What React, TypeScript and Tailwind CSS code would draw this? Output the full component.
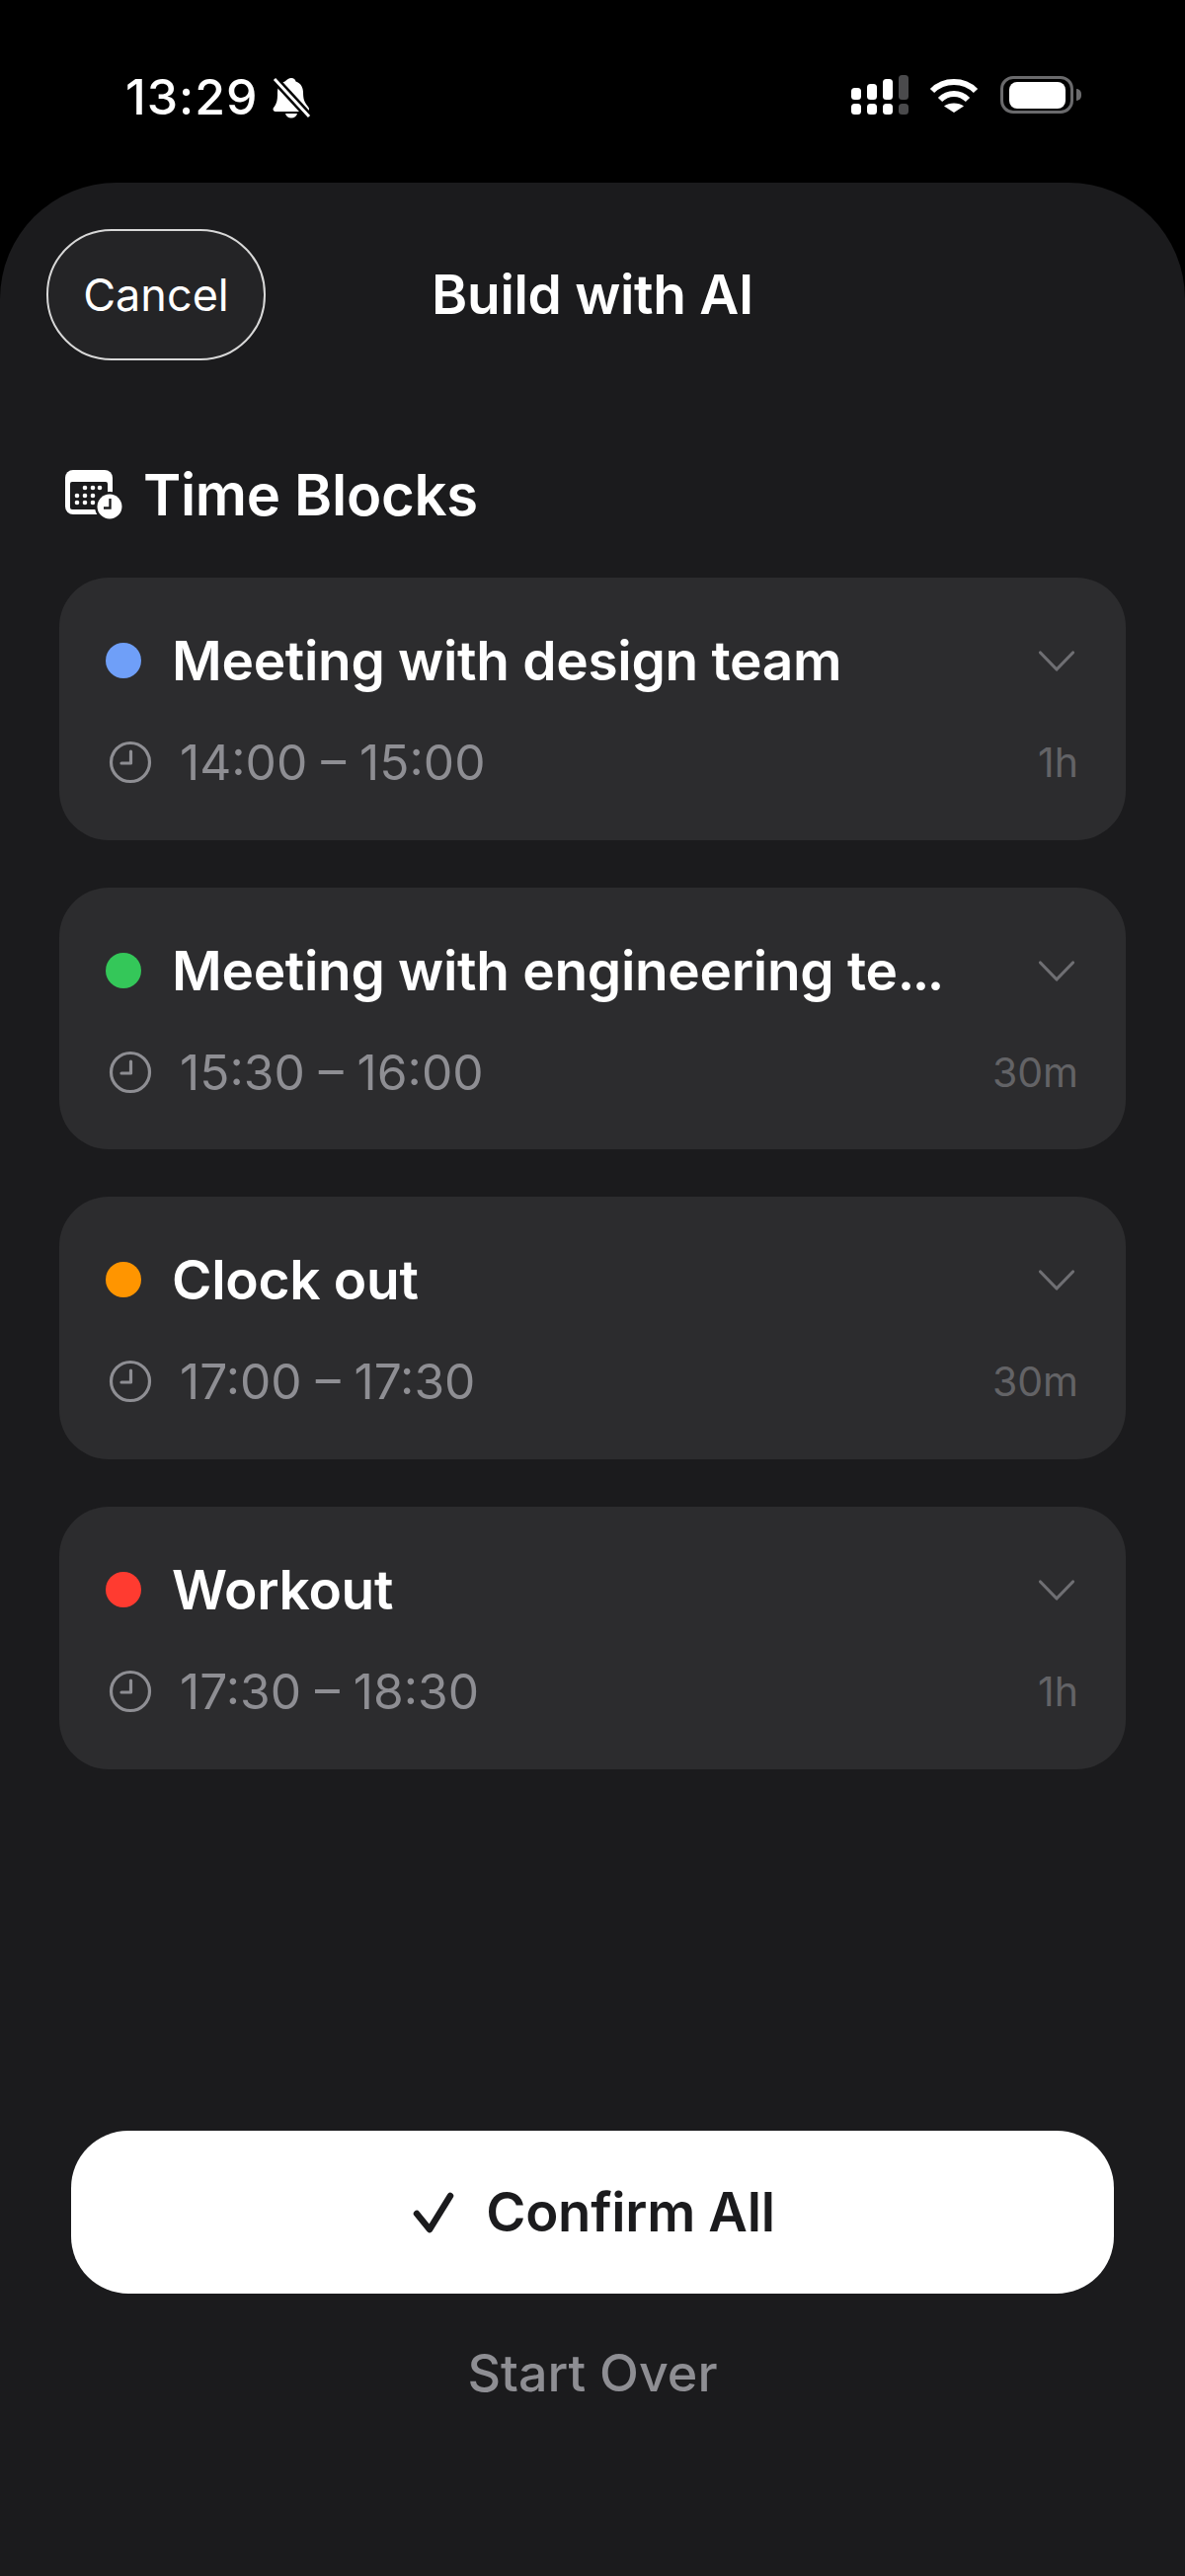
import React from "react";

const Clock = () => (
  <svg width="44" height="44" viewBox="0 0 44 44" fill="none" stroke="#8e8e93" strokeWidth="3.200" strokeLinecap="round" strokeLinejoin="round" className="shrink-0">
    <circle cx="22" cy="22" r="19.500" />
    <path d="M22.500 11V23H13" />
  </svg>
);

const Chevron = () => (
  <svg width="38" height="24" viewBox="0 0 38 24" fill="none" stroke="#6f6f73" strokeWidth="3.200" strokeLinecap="round" strokeLinejoin="round" className="mr-[3px] mt-[2px] shrink-0">
    <path d="M2.500 3L19 20L35.500 3" />
  </svg>
);

const items = [
  { title: "Meeting with design team", time: "14:00 – 15:00", dur: "1h", dot: "bg-[#6f9ff8]" },
  { title: "Meeting with engineering te", more: true, time: "15:30 – 16:00", dur: "30m", dot: "bg-[#34c759]" },
  { title: "Clock out", time: "17:00 – 17:30", dur: "30m", dot: "bg-[#ff9500]" },
  { title: "Workout", time: "17:30 – 18:30", dur: "1h", dot: "bg-[#ff3b30]" },
];

const CalendarClock = () => {
  const pts = [[21, 18], [29, 18], [36, 18], [13, 26], [21, 26], [29, 26], [13, 33], [21, 33], [29, 33]];
  return (
    <svg width="60" height="50" viewBox="0 0 60 50" className="shrink-0">
      <rect x="1" y="0" width="48" height="45" rx="8" fill="#fff" />
      <rect x="6" y="12" width="38" height="28" rx="2" fill="#1b1b1d" />
      <g fill="#fff">
        {pts.map(([x, y]) => (
          <circle key={`${x}-${y}`} cx={x} cy={y} r="2.300" />
        ))}
      </g>
      <circle cx="46" cy="37" r="15" fill="#1b1b1d" />
      <circle cx="46" cy="37" r="12.500" fill="#fff" />
      <path d="M46.500 29V38.500H40" stroke="#1b1b1d" strokeWidth="2.400" fill="none" />
    </svg>
  );
};

export default function App() {
  return (
    <div className="flex h-[2609px] w-[1200px] flex-col overflow-hidden bg-black font-['Inter','Liberation_Sans',sans-serif] text-white">
      <div className="flex h-[185px] shrink-0 items-start justify-between pl-[127px] pr-[105px] pt-[69px]">
        <div className="flex items-center gap-[13px]">
          <span className="text-[50px] font-medium leading-[58px] tracking-[1px]">13:29</span>
          <svg width="40" height="42" viewBox="0 0 40 42" className="mt-[2px]">
            <path fill="#fff" d="M20 1c2.500 0 4 1.500 4.500 3.500 5 1.500 7.500 6 7.500 11 0 6 1 9 3 12 2 2.500 3 3.500 3 5 0 1.500-1 2.500-2.500 2.500H4c-1.500 0-2.500-1-2.500-2.500 0-1.500 2-3 3-5.500 1.500-3 1.500-7 1.500-11.500 0-5 2.500-9.500 7.500-11C16 2.500 17.500 1 20 1ZM14 37h12c-.5 2.500-3 4.500-6 4.500s-5.500-2-6-4.500Z" />
            <path d="M3 2 38 40" stroke="#000" strokeWidth="8" />
            <path d="M3 2 38 40" stroke="#fff" strokeWidth="3" />
          </svg>
        </div>
        <div className="mt-[7px] flex h-[42px] items-center">
          <svg width="60" height="42" viewBox="0 0 60 42" fill="#fff" className="mr-[20px]">
            <rect x="1" y="13" width="10" height="12" rx="3.500" />
            <rect x="17" y="9" width="10" height="16" rx="3.500" />
            <rect x="33" y="4" width="10" height="21" rx="3.500" />
            <rect x="49" y="0" width="10" height="25" rx="3.500" fill="#4a4a4c" />
            <rect x="1" y="29" width="10" height="11" rx="3.500" />
            <rect x="17" y="29" width="10" height="11" rx="3.500" />
            <rect x="33" y="29" width="10" height="11" rx="3.500" />
            <rect x="49" y="29" width="10" height="11" rx="3.500" fill="#4a4a4c" />
          </svg>
          <svg width="50" height="38" viewBox="0 0 50 38" fill="none" stroke="#fff" strokeWidth="6" className="mb-[3px] mr-[22px]">
            <path d="M3 15C15 3 35 3 47 15" />
            <path d="M11 24C19 16 31 16 39 24" />
            <path fill="#fff" stroke="none" d="M25 37 15 30.500C20 26.500 30 26.500 35 30.500Z" />
          </svg>
          <div className="mb-[2px] flex items-center gap-[3px]">
            <div className="flex h-[38px] w-[74px] items-center justify-center rounded-[13px] border-[3px] border-[#6a6a6c]">
              <div className="h-[27px] w-[57px] rounded-[8px] bg-white" />
            </div>
            <div className="h-[12px] w-[5px] rounded-r-full bg-[#6a6a6c]" />
          </div>
        </div>
      </div>

      <div className="flex min-h-0 flex-1 flex-col rounded-t-[118px] bg-[#1b1b1d]">
        <div className="relative mt-[47px] flex h-[133px] shrink-0 items-center pl-[47px]">
          <button className="flex h-[133px] w-[222px] items-center justify-center rounded-[66px] border-2 border-[#d8d8d8] bg-[#242426] text-[45px] leading-none">
            Cancel
          </button>
          <div className="absolute inset-x-0 text-center text-[55px] font-semibold leading-none tracking-[-0.3px]">Build with AI</div>
        </div>

        <div className="mt-[104px] flex h-[64px] items-center gap-[20px] pl-[65px]">
          <CalendarClock />
          <h2 className="text-[58px] font-semibold leading-[64px] tracking-[-0.3px]">Time Blocks</h2>
        </div>

        <div className="mt-[52px] flex flex-col gap-[48px] px-[60px]">
          {items.map((it) => (
            <div key={it.title} className="flex h-[265.67px] flex-col rounded-[50px] bg-[#2c2c2e] pl-[47px] pr-[48px] pt-[54px]">
              <div className="flex h-[60px] items-center">
                <div className={`h-[36px] w-[36px] shrink-0 rounded-full ${it.dot}`} />
                <div className="ml-[31px] flex-1 text-[55px] font-semibold leading-[60px] tracking-[-0.3px]">
                  {it.title}
                  {it.more ? <span className="tracking-[-2.5px]">...</span> : null}
                </div>
                <Chevron />
              </div>
              <div className="mt-[43px] flex h-[60px] items-center pl-[3px]">
                <Clock />
                <div className="ml-[28px] flex-1 text-[49.700px] leading-[60px] text-[#8e8e93]">{it.time}</div>
                <div className="text-[41px] leading-[60px] text-[#636366]">{it.dur}</div>
              </div>
            </div>
          ))}
        </div>

        <div className="mt-auto flex flex-col items-center px-[72px] pb-[175px]">
          <button className="flex h-[165px] w-full items-center justify-center gap-[32px] rounded-[58px] bg-white pl-[3px] text-[#1b1b1d]">
            <svg width="42" height="42" viewBox="0 0 42 42" fill="none" stroke="#1b1b1d" strokeWidth="6.500" strokeLinecap="round" strokeLinejoin="round">
              <path d="M4 22L17 38L38 4" />
            </svg>
            <span className="text-[54.500px] font-semibold leading-none tracking-[-0.3px]">Confirm All</span>
          </button>
          <div className="mt-[51px] text-[52px] font-medium leading-[60px] text-[#8e8e93]">Start Over</div>
        </div>
      </div>
    </div>
  );
}
